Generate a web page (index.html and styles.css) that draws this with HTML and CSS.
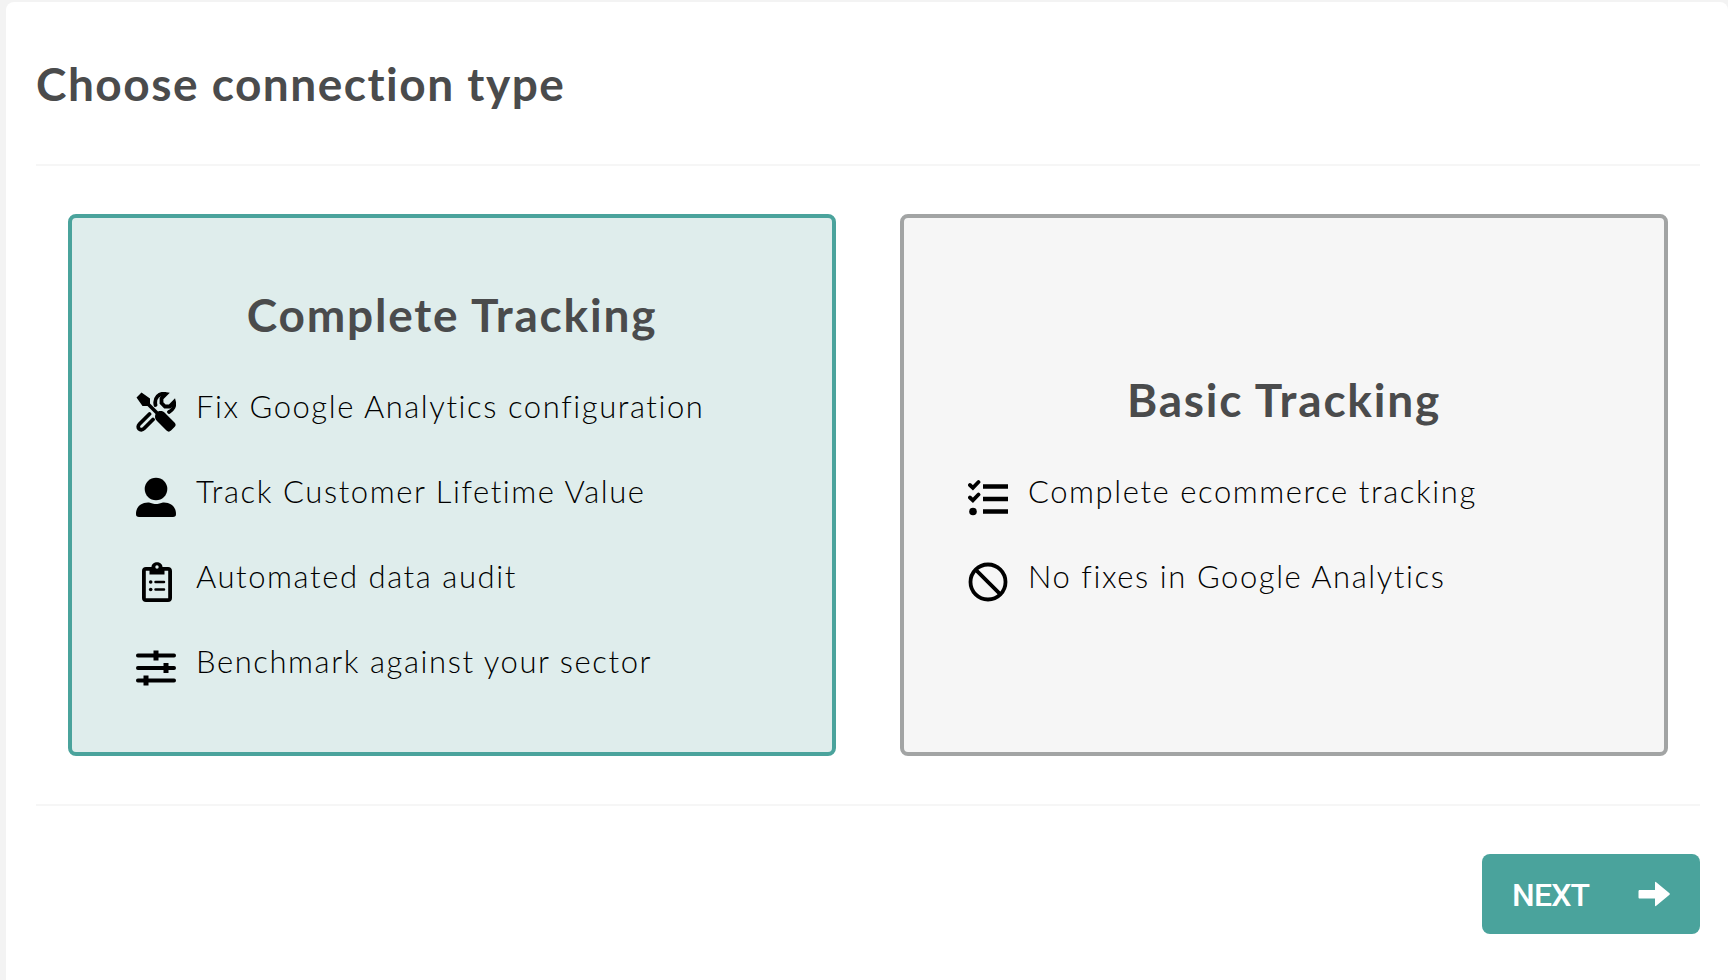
FILE: index.html
```
<!DOCTYPE html>
<html lang="en">
<head>
    <meta charset="UTF-8">
    <meta name="viewport" content="width=device-width, initial-scale=1.0">
    <title>Choose connection type</title>
    <link rel="stylesheet" href="styles.css">
</head>
<body>
    <main class="panel">
        <header class="panel-header">
            <h1>Choose connection type</h1>
        </header>

        <div class="options">
            <section class="option selected">
                <h2>Complete Tracking</h2>
                <ul>
                    <li>
                        <svg class="icon" viewBox="0 0 40 40">
                            <path d="M5.5 0.5 L14 6.5 V11.5 L22 19.5 C25 18.5 27 19 29 21 L38.5 30.5 C40 32 40 33.5 38.5 35 L35 38.5 C33.5 40 32 40 30.5 38.5 L21 29 C19 27 18.500 25 19.500 22 L11.500 14 H6.500 L0.500 5.500 Z"/>
                            <path class="line" d="M13.500 22 L3.500 32 C0 35.500 4.500 40 8 36.500 L17 27.500 M19.500 13 C18 6 23 0.500 30 2 L25.500 6.500 V11 L29 14.500 H33.500 L38 10 C39 14 37 18 33 20"/>
                        </svg>
                        <span>Fix Google Analytics configuration</span>
                    </li>
                    <li>
                        <svg class="icon" viewBox="0 0 40 40">
                            <circle cx="20" cy="12" r="11.300"/>
                            <path d="M12 25.500 C15 25.500 16 27 20 27 C24 27 25 25.500 28 25.500 C35 25.500 40 30 40 37 C40 39.300 39 40 37 40 H3 C1 40 0 39.300 0 37 C0 30 5 25.500 12 25.500 Z"/>
                        </svg>
                        <span>Track Customer Lifetime Value</span>
                    </li>
                    <li>
                        <svg class="icon" viewBox="0 0 40 40">
                            <path fill-rule="evenodd" d="M10 5 H15.500 C15.500 -1.500 26.500 -1.500 26.500 5 H32 C34.500 5 36 6.500 36 9 V36 C36 38.500 34.500 40 32 40 H10 C7.500 40 6 38.500 6 36 V9 C6 6.500 7.500 5 10 5 Z M9.800 8.800 V36.200 H32.200 V8.800 H28.500 V12.500 H13.500 V8.800 Z M21 3.300 A1.700 1.700 0 1 0 21 6.700 A1.700 1.700 0 1 0 21 3.300 Z"/>
                            <circle cx="14.700" cy="20" r="1.800"/>
                            <circle cx="14.700" cy="27.500" r="1.800"/>
                            <path class="thin" d="M19.500 20 H28 M19.500 27.500 H28"/>
                        </svg>
                        <span>Automated data audit</span>
                    </li>
                    <li>
                        <svg class="icon" viewBox="0 0 40 40">
                            <path class="line" d="M1.900 8.500 H38.100 M1.900 21 H38.100 M1.900 33.500 H38.100"/>
                            <path class="knob" d="M20 3.500 V13.500 M30 16 V26 M10 28.500 V38.500"/>
                        </svg>
                        <span>Benchmark against your sector</span>
                    </li>
                </ul>
            </section>

            <section class="option">
                <h2>Basic Tracking</h2>
                <ul>
                    <li>
                        <svg class="icon" viewBox="0 0 40 40">
                            <path class="line" d="M1.900 8 L4.900 10.800 L10.500 5 M1.900 20.500 L4.900 23.300 L10.500 17.500"/>
                            <circle cx="5" cy="34.500" r="3.800"/>
                            <path class="bar" d="M15 9.500 H40 M15 22 H40 M15 34.500 H40"/>
                        </svg>
                        <span>Complete ecommerce tracking</span>
                    </li>
                    <li>
                        <svg class="icon" viewBox="0 0 40 40">
                            <path class="ban" d="M20 2.500 A17.500 17.500 0 1 0 20 37.500 A17.500 17.500 0 1 0 20 2.500 M7.600 7.600 L32.400 32.400"/>
                        </svg>
                        <span>No fixes in Google Analytics</span>
                    </li>
                </ul>
            </section>
        </div>

        <footer class="panel-footer">
            <button type="button" class="button">
                <span>NEXT</span>
                <svg class="arrow" viewBox="0 0 32 26">
                    <path d="M2 9 H17 V2 C17 0.500 17.500 0.500 18.500 1.500 L31.500 12.200 C32 12.700 32 13.300 31.500 13.800 L18.500 24.500 C17.500 25.500 17 25.500 17 24 V17.500 H2 C0.700 17.500 0.500 17 0.500 16 V10.500 C0.500 9.500 0.700 9 2 9 Z"/>
                </svg>
            </button>
        </footer>
    </main>
</body>
</html>
```
FILE: styles.css
```
:root {
    --primary: #4AA39C;
    --primary-light: #DFEDEC;
    --dark: #4A4B4C;
    --gray: #A2A4A4;
    --gray-light: #F6F6F6;
}

* {
    box-sizing: border-box;
    margin: 0;
    padding: 0;
}

body {
    font-family: 'Lato', sans-serif;
    height: 100vh;
    padding: 2px 0 0 6px;
    background: #F3F3F3;
    overflow: hidden;
}

.panel {
    height: 978px;
    padding: 0 28px 0 30px;
    background: #FFFFFF;
    border-radius: 8px 8px 0 0;
}

.panel-header {
    height: 164px;
    padding-top: 54px;
    border-bottom: 2px solid var(--gray-light);
}

h1,
h2 {
    color: var(--dark);
    font-size: 46px;
    font-weight: 700;
    line-height: 56px;
    letter-spacing: 1.5px;
}

.options {
    display: grid;
    grid-template-columns: 1fr 1fr;
    gap: 64px;
    height: 638px;
    padding: 48px 32px;
}

.option {
    display: flex;
    flex-direction: column;
    justify-content: center;
    padding: 0 64px;
    background: var(--gray-light);
    border: 4px solid var(--gray);
    border-radius: 8px;
}

.option.selected {
    background: var(--primary-light);
    border-color: var(--primary);
}

h2 {
    height: 109px;
    padding-top: 26px;
    letter-spacing: 1.8px;
    text-align: center;
}

ul {
    list-style: none;
}

li {
    display: flex;
    align-items: center;
    gap: 20px;
    height: 85px;
    font-size: 31px;
    font-weight: 300;
    line-height: 40px;
    letter-spacing: 1.57px;
    white-space: nowrap;
}

li span {
    padding-bottom: 12px;
}

.icon {
    width: 40px;
    height: 40px;
    flex-shrink: 0;
}

.icon path[class] {
    fill: none;
    stroke: #000;
    stroke-width: 3.8;
}

.icon .line {
    stroke-linecap: round;
}

.icon path.thin {
    stroke-width: 2.5;
    stroke-linecap: round;
}

.icon path.knob {
    stroke-width: 5;
}

.icon path.bar {
    stroke-width: 4.4;
}

.panel-footer {
    display: flex;
    justify-content: flex-end;
    padding-top: 48px;
    border-top: 2px solid var(--gray-light);
}

.button {
    display: flex;
    align-items: center;
    justify-content: space-between;
    width: 218px;
    height: 80px;
    padding: 0 30px;
    background: var(--primary);
    color: #FFFFFF;
    border: none;
    border-radius: 8px;
    font-family: 'Roboto', sans-serif;
    font-size: 32px;
    font-weight: 500;
    letter-spacing: -0.8px;
    cursor: pointer;
}

.button span {
    padding-top: 2px;
}

.arrow {
    width: 32px;
    height: 26px;
    margin-bottom: 1px;
    fill: #FFFFFF;
}
```
